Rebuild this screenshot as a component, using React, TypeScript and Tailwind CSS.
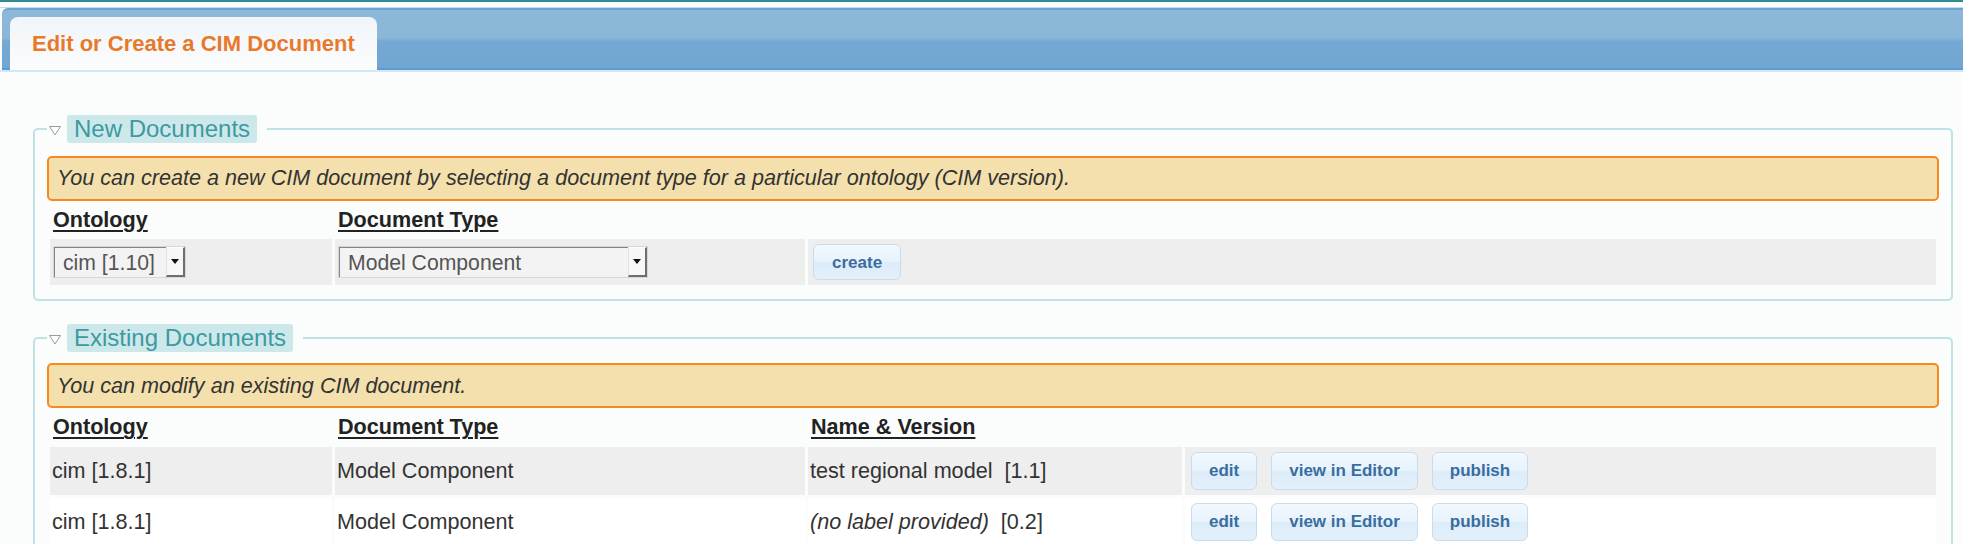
import type { ReactNode } from "react";

const ontologies = [
  { ontology: "cim [1.8.1]", type: "Model Component", name: "test regional model", italic: false, version: "[1.1]" },
  { ontology: "cim [1.8.1]", type: "Model Component", name: "(no label provided)", italic: true, version: "[0.2]" },
];

function Legend({ children }: { children: ReactNode }) {
  return (
    <legend className="flex items-center pl-[1px] pr-[10px]">
      <svg width="14" height="12" viewBox="0 0 14 12" className="mt-[4px]">
        <polygon points="1.5,1.5 12.5,1.5 7,10" fill="#ffffff" stroke="#9a9a9a" strokeWidth="1" />
      </svg>
      <span className="ml-[5px] h-[28px] rounded-[3px] bg-[#cde8ea] px-[7px] text-[24px] leading-[28px] text-[#3c9aa0]">
        {children}
      </span>
    </legend>
  );
}

function Notice({ children }: { children: ReactNode }) {
  return (
    <div className="flex h-[45px] items-center rounded-[5px] border-2 border-[#f7891f] bg-[#f4e0ac] px-[8px] text-[21.6px] italic text-[#333333]">
      {children}
    </div>
  );
}

function FakeSelect({ value, width }: { value: string; width: string }) {
  return (
    <div className={`flex h-[32px] ${width} border border-[#d6d6d6] bg-[#f3f3f3]`}>
      <div className="flex flex-1 items-center border-l border-t border-[#858585] pl-[8px] text-[21.2px] text-[#555555]">
        {value}
      </div>
      <div className="flex w-[19px] items-center justify-center border-b-2 border-l border-r-2 border-t border-b-[#6e6e6e] border-l-[#e2e2e2] border-r-[#6e6e6e] border-t-[#ffffff] bg-[#f7f7f7]">
        <svg width="8" height="5" viewBox="0 0 8 5">
          <polygon points="0,0 8,0 4,5" fill="#111111" />
        </svg>
      </div>
    </div>
  );
}

function Btn({ children }: { children: ReactNode }) {
  return (
    <button className="h-[38px] rounded-[6px] border border-[#c6dcef] bg-[linear-gradient(to_bottom,#f2f8fe_0%,#e8f3fc_48%,#dcecf9_52%,#e3f0fb_100%)] px-[17px] text-[17px] font-bold text-[#3a6d9f]">
      {children}
    </button>
  );
}

function Th({ children }: { children: ReactNode }) {
  return (
    <th className="h-[29px] px-[3px] text-left align-middle text-[21.6px] font-bold text-[#222222] underline decoration-2 underline-offset-[3px]">
      {children}
    </th>
  );
}

export default function App() {
  return (
    <div className="min-h-screen bg-[#fbfcfc] font-['Liberation_Sans',Arial,sans-serif]">
      {/* top line */}
      <div className="h-[2px] bg-[#2f8c8f]" />

      {/* tab bar */}
      <div className="mt-[5px] border-b-2 border-t border-b-[#d6e7f4] border-t-[#c4dcf0] pl-[2px]">
        <div className="flex h-[62px] items-end rounded-tl-[6px] border-b-2 border-t-2 border-b-[#5c9bd5] border-t-[#6ca4d3] bg-[linear-gradient(to_bottom,#8cb8da_0%,#8ab6d8_48%,#75a9d3_54%,#70a6d2_100%)] pl-[8px]">
          <div className="-mb-[2px] flex h-[53px] items-center rounded-t-[8px] bg-[linear-gradient(to_bottom,#f1f5f9_0%,#fbfcfd_100%)] px-[22px] text-[22px] font-bold text-[#e8792a]">
            Edit or Create a CIM Document
          </div>
        </div>
      </div>

      <div className="ml-[33px] mr-[10px]">
        {/* New Documents */}
        <fieldset className="mt-[43px] rounded-[5px] border-2 border-[#bfe2e6] px-[12px] pb-[11px] pt-[13px]">
          <Legend>New Documents</Legend>
          <Notice>You can create a new CIM document by selecting a document type for a particular ontology (CIM version).</Notice>
          <table className="w-full table-fixed border-separate border-spacing-[3px]">
            <colgroup>
              <col className="w-[282px]" />
              <col className="w-[470px]" />
              <col />
            </colgroup>
            <thead>
              <tr>
                <Th>Ontology</Th>
                <Th>Document Type</Th>
                <th />
              </tr>
            </thead>
            <tbody>
              <tr>
                <td className="h-[46px] bg-[#eeeeee] px-[3px] align-middle">
                  <FakeSelect value="cim [1.10]" width="w-[133px]" />
                </td>
                <td className="h-[46px] bg-[#eeeeee] px-[3px] align-middle">
                  <FakeSelect value="Model Component" width="w-[310px]" />
                </td>
                <td className="h-[46px] bg-[#eeeeee] pl-[5px] align-middle">
                  <button className="h-[36px] rounded-[6px] border border-[#c6dcef] bg-[linear-gradient(to_bottom,#f2f8fe_0%,#e8f3fc_48%,#dcecf9_52%,#e3f0fb_100%)] px-[18px] text-[17px] font-bold text-[#3a6d9f]">
                    create
                  </button>
                </td>
              </tr>
            </tbody>
          </table>
        </fieldset>

        {/* Existing Documents */}
        <fieldset className="mt-[23px] rounded-[5px] border-2 border-[#bfe2e6] px-[12px] pb-[11px] pt-[11px]">
          <Legend>Existing Documents</Legend>
          <Notice>You can modify an existing CIM document.</Notice>
          <table className="w-full table-fixed border-separate border-spacing-[3px]">
            <colgroup>
              <col className="w-[282px]" />
              <col className="w-[470px]" />
              <col className="w-[374px]" />
              <col />
            </colgroup>
            <thead>
              <tr>
                <Th>Ontology</Th>
                <Th>Document Type</Th>
                <Th>Name &amp; Version</Th>
                <th />
              </tr>
            </thead>
            <tbody>
              {ontologies.map((doc, i) => (
                <tr key={i} className={i % 2 === 0 ? "bg-[#eeeeee]" : "bg-white"}>
                  <td className="h-[48px] px-[2px] align-middle text-[21.6px] text-[#333333]">{doc.ontology}</td>
                  <td className="h-[48px] px-[2px] align-middle text-[21.6px] text-[#333333]">{doc.type}</td>
                  <td className="h-[48px] whitespace-pre px-[2px] align-middle text-[21.6px] text-[#333333]">
                    <span className={doc.italic ? "italic" : ""}>{doc.name}</span>
                    {"  "}
                    {doc.version}
                  </td>
                  <td className="h-[48px] pl-[6px] align-middle">
                    <div className="flex gap-[14px]">
                      <Btn>edit</Btn>
                      <Btn>view in Editor</Btn>
                      <Btn>publish</Btn>
                    </div>
                  </td>
                </tr>
              ))}
            </tbody>
          </table>
        </fieldset>
      </div>
    </div>
  );
}
